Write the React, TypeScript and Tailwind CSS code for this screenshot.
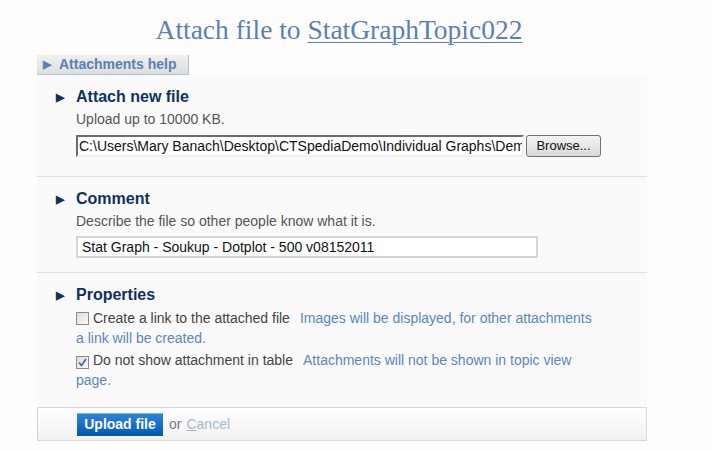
function Heading({ children }: { children: React.ReactNode }) {
  return (
    <div className="flex h-[20px] items-center text-[16px] font-bold text-[#0d3260]">
      <span className="w-[20px] text-[11px] leading-none">▶</span>
      {children}
    </div>
  );
}

function Checkbox({ checked }: { checked?: boolean }) {
  return (
    <span className="mr-[4px] inline-flex h-[13px] w-[13px] items-center justify-center border border-[#8a8a8a] bg-gradient-to-br from-[#dcdcdc] to-[#fbfbfb] align-[-2px]">
      {checked && (
        <svg width="9" height="9" viewBox="0 0 9 9">
          <path d="M1 4.5 L3.5 7.5 L8 1" stroke="#3a5fb0" strokeWidth="1.6" fill="none" />
        </svg>
      )}
    </span>
  );
}

export default function App() {
  return (
    <main className="min-h-screen bg-[#fffdfb] font-['Liberation_Sans',Arial,sans-serif] text-[14px] text-[#444]">
      <h1 className="pt-[15px] pr-[34px] text-center font-['Liberation_Serif',serif] text-[27.5px] leading-[30px] text-[#5a80b8]">
        Attach file to{" "}
        <a href="#" className="underline decoration-1 underline-offset-[3px]">
          StatGraphTopic022
        </a>
      </h1>

      <div className="ml-[37px] mt-[10px] w-[610px]">
        <div className="flex h-[20px] w-[152px] items-center gap-[8px] border-r border-b border-[#9fc6dc] bg-gradient-to-b from-[#f0f0f0] to-[#dedede] pl-[6px] text-[14px] font-bold text-[#5a7fb5]">
          <span className="text-[11px]">▶</span>
          Attachments help
        </div>

        <div className="bg-[#fafafa]">
          <section className="border-b border-[#e0e0e0] pt-[12px] pb-[19px] pl-[19px]">
            <Heading>Attach new file</Heading>
            <div className="mt-[2px] h-[20px] pl-[20px] leading-[20px] text-[#555]">Upload up to 10000 KB.</div>
            <div className="mt-[6px] flex pl-[20px]">
              <div className="h-[22px] w-[448px] overflow-hidden whitespace-nowrap border-2 border-t-[#6c6c6c] border-l-[#6c6c6c] border-r-[#f0f0f0] border-b-[#f0f0f0] bg-white pl-[1px] leading-[18px] text-[#111]">
                C:\Users\Mary Banach\Desktop\CTSpediaDemo\Individual Graphs\Demo
              </div>
              <button className="ml-[2px] h-[22px] w-[75px] rounded-[3px] border border-[#707070] bg-gradient-to-b from-[#f4f4f4] to-[#dadada] text-[13px] text-[#111]">
                Browse...
              </button>
            </div>
          </section>

          <section className="border-b border-[#e0e0e0] pt-[12px] pb-[14px] pl-[19px]">
            <Heading>Comment</Heading>
            <div className="mt-[2px] h-[20px] pl-[20px] leading-[20px] text-[#555]">
              Describe the file so other people know what it is.
            </div>
            <div className="mt-[5px] pl-[20px]">
              <div className="h-[22px] w-[462px] border-2 border-[#d6d6d6] bg-white pl-[4px] leading-[18px] text-[#111]">
                Stat Graph - Soukup - Dotplot - 500 v08152011
              </div>
            </div>
          </section>

          <section className="pt-[12px] pb-[17px] pl-[19px]">
            <Heading>Properties</Heading>
            <div className="mt-[3px] w-[542px] pl-[20px] leading-[20px]">
              <Checkbox />
              <span className="text-[#444]">Create a link to the attached file</span>
              <span className="ml-[10px] text-[#5b86c0]">Images will be displayed, for other attachments a link will be created.</span>
            </div>
            <div className="mt-[2px] w-[542px] pl-[20px] leading-[20px]">
              <Checkbox checked />
              <span className="text-[#444]">Do not show attachment in table</span>
              <span className="ml-[10px] text-[#5b86c0]">Attachments will not be shown in topic view page.</span>
            </div>
          </section>
        </div>

        <div className="flex h-[34px] items-center border border-[#d8d8d8] bg-gradient-to-b from-[#ffffff] to-[#f1f1f1] pl-[39px]">
          <button className="h-[23px] w-[86px] border-t border-[#7fb2e6] bg-gradient-to-b from-[#2d84d8] to-[#0057b4] text-[14px] font-bold text-white">
            Upload file
          </button>
          <span className="ml-[6px] text-[#777]">or</span>
          <a href="#" className="ml-[5px] text-[#a6b9d0]">
            <u>C</u>ancel
          </a>
        </div>
      </div>
    </main>
  );
}
